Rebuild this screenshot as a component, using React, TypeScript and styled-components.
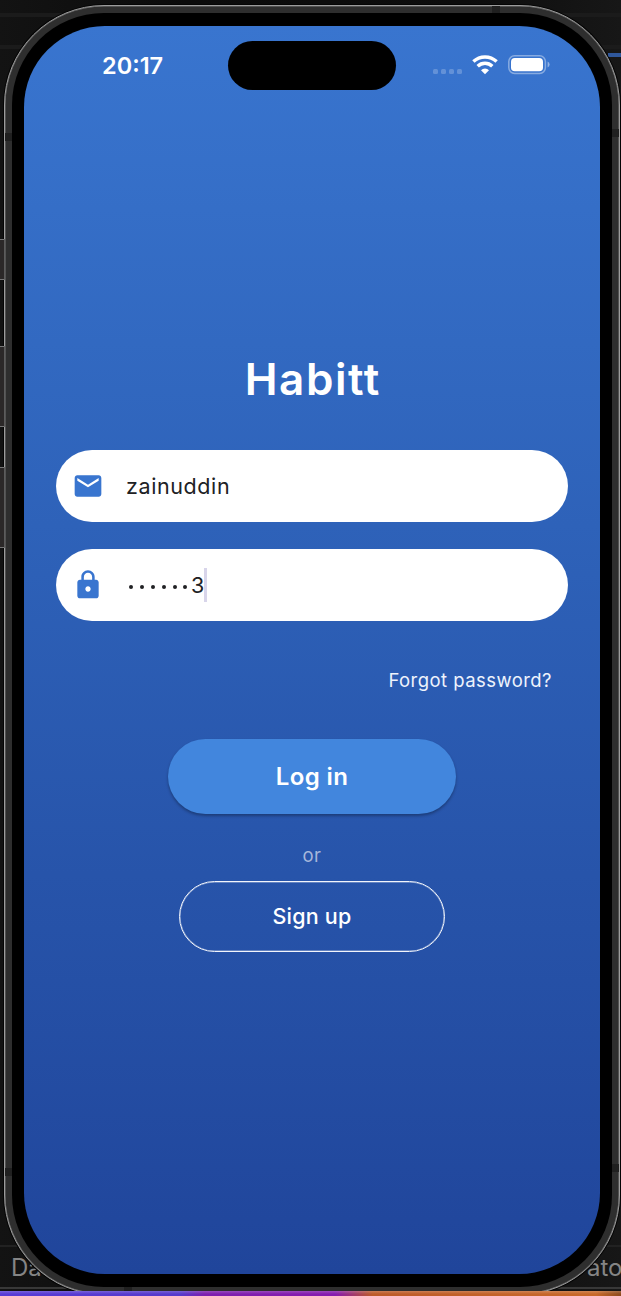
import React from "react";
import styled, { createGlobalStyle } from "styled-components";

const GlobalStyle = createGlobalStyle`
  * { box-sizing: border-box; }
  body { margin: 0; background: #111; }
  button, input { font-family: inherit; }
`;

const Desktop = styled.div`
  position: relative;
  width: 621px;
  height: 1296px;
  overflow: hidden;
  padding: 5px 0 0 4px;
  background: linear-gradient(90deg, #131313, #0b0b0b 30%, #0d0d0d 75%, #171717);
  font-family: Inter, "Liberation Sans", sans-serif;
`;

const Rule = styled.div<{ $top: number; $left?: number; $color: string; $size: number }>`
  position: absolute;
  left: ${(p) => p.$left ?? 0}px;
  right: 0;
  top: ${(p) => p.$top}px;
  height: ${(p) => p.$size}px;
  background: ${(p) => p.$color};
`;

const Caption = styled.span<{ $left: number }>`
  position: absolute;
  left: ${(p) => p.$left}px;
  top: 1254px;
  font-size: 24px;
  line-height: 28px;
  color: #858585;
`;

const SideButton = styled.div<{ $top: number; $height: number }>`
  position: absolute;
  left: -6px;
  top: ${(p) => p.$top}px;
  width: 6px;
  height: ${(p) => p.$height}px;
  background: #2b2828;
  border: 1px solid #777;
  border-right-color: #5c5c5c;
`;

const Antenna = styled.i<{ $side: "left" | "right" | "top" | "bottom"; $at: number }>`
  position: absolute;
  background: #202020;
  ${(p) => p.$side}: 0;
  ${(p) =>
    p.$side === "left" || p.$side === "right"
      ? `top: ${p.$at}px; width: 7px; height: 8px;`
      : `left: ${p.$at}px; width: 8px; height: 7px;`}
`;

const Frame = styled.div`
  position: relative;
  width: 616px;
  height: 1290px;
  padding: 7px;
  border: 1px solid #9c9c9c;
  border-radius: 100px;
  background: #2e2e2e;
  box-shadow: 0 0 0 1px #050505, inset 0 0 0 0.5px #777;
`;

const Bezel = styled.div`
  height: 1274px;
  padding: 13px 12px;
  border-radius: 92px;
  background: #000;
`;

const Screen = styled.main`
  display: flex;
  flex-direction: column;
  align-items: center;
  width: 576px;
  height: 1248px;
  border-radius: 81px;
  background: linear-gradient(180deg, #3975cf 0%, #2e62b9 40%, #2754aa 68%, #20459b 100%);
  color: #fff;
`;

const StatusBar = styled.header`
  display: flex;
  align-items: flex-start;
  width: 100%;
  height: 65px;
  padding: 15px 48px 0 78px;
`;

const Clock = styled.time`
  width: 126px;
  padding-top: 11px;
  font-size: 23.5px;
  line-height: 28px;
  font-weight: 600;
`;

const Island = styled.div`
  width: 168px;
  height: 49px;
  border-radius: 25px;
  background: #000;
`;

const StatusIcons = styled.svg`
  flex: none;
  margin: 12px 0 0 36px;
`;

const Brand = styled.h1`
  margin: 260px 0 1px;
  height: 56px;
  font-size: 44px;
  line-height: 56px;
  font-weight: 600;
  letter-spacing: 1.6px;
  text-indent: 1.6px;
`;

const Form = styled.form`
  display: flex;
  flex-direction: column;
  align-items: center;
  width: 512px;
  padding-top: 42px;
`;

const Field = styled.label<{ $gap?: number }>`
  display: flex;
  align-items: center;
  width: 512px;
  height: 72px;
  margin-bottom: ${(p) => p.$gap ?? 0}px;
  padding-left: 16px;
  border-radius: 36px;
  background: #fff;
  color: #202124;
`;

const FieldIcon = styled.svg`
  width: 32px;
  height: 32px;
  margin-right: 22px;
  fill: #3975cf;
`;

const Value = styled.span`
  font-size: 21.5px;
  line-height: 28px;
  letter-spacing: 0.6px;
  padding-bottom: 1px;
`;

const Mask = styled.span`
  display: flex;
  gap: 6.9px;
  padding: 3px 3.5px 0 3px;
`;

const Dot = styled.i`
  width: 4px;
  height: 4px;
  border-radius: 50%;
  background: #202124;
`;

const Caret = styled.span`
  width: 3px;
  height: 34px;
  margin-left: -1px;
  background: #d8d5ea;
`;

const Forgot = styled.a`
  align-self: flex-end;
  margin: 46px 16px 0 0;
  font-size: 18.5px;
  line-height: 26px;
  letter-spacing: 0.45px;
  color: #eef3fc;
`;

const PillButton = styled.button<{ $outlined?: boolean }>`
  width: ${(p) => (p.$outlined ? 266 : 288)}px;
  height: ${(p) => (p.$outlined ? 71 : 75)}px;
  margin-top: ${(p) => (p.$outlined ? 13 : 46)}px;
  padding: ${(p) => (p.$outlined ? "0 0 2px" : "0")};
  border: ${(p) => (p.$outlined ? "1px solid #f2f5fb" : "0")};
  border-radius: 38px;
  background: ${(p) => (p.$outlined ? "transparent" : "#4286dd")};
  box-shadow: ${(p) =>
    p.$outlined ? "inset 0 0 0 0.5px rgba(242, 245, 251, 0.6)" : "0 2px 3px rgba(0, 0, 0, 0.3)"};
  color: #fff;
  font-size: ${(p) => (p.$outlined ? 21.5 : 24)}px;
  font-weight: ${(p) => (p.$outlined ? 500 : 600)};
  letter-spacing: ${(p) => (p.$outlined ? 0.2 : 0.4)}px;
`;

const Or = styled.span`
  margin-top: 28px;
  font-size: 18.5px;
  line-height: 26px;
  letter-spacing: 0.4px;
  color: #a6b7db;
`;

const Strip = styled.div`
  position: absolute;
  left: 0;
  right: 0;
  bottom: 0;
  height: 5px;
  background:
    linear-gradient(180deg, rgba(255, 255, 255, 0.2), transparent 60%),
    linear-gradient(90deg, #583bd6 0%, #553acb 29%, #7d1fae 33%, #861bae 54%, #bd5a28 60%, #c8692a 96%, #8e4a1e 100%);
`;

export default function App() {
  return (
    <Desktop>
      <GlobalStyle />
      <Rule $top={13} $size={4} $color="#1b1b1b" />
      <Rule $top={45} $size={4} $color="#1b1b1b" />
      <Rule $top={53} $left={608} $size={4} $color="#2f579b" />
      <Rule $top={1245} $size={2} $color="#222" />
      <Rule $top={1287} $size={2} $color="#383838" />
      <Caption $left={11}>Da</Caption>
      <Caption $left={587}>ato</Caption>
      <Frame>
        <Bezel>
          <Screen>
            <StatusBar>
              <Clock>20:17</Clock>
              <Island />
              <StatusIcons width="120" height="24" viewBox="0 0 120 24">
                <g fill="#fff" fillOpacity="0.22">
                  <rect x="1" y="16" width="5" height="5" rx="1.5" />
                  <rect x="9" y="16" width="5" height="5" rx="1.5" />
                  <rect x="17" y="16" width="5" height="5" rx="1.5" />
                  <rect x="25" y="16" width="5" height="5" rx="1.5" />
                </g>
                <g fill="none" stroke="#fff" strokeWidth="3.4">
                  <path d="M41.4 8.6a16.8 16.8 0 0 1 23.2 0" />
                  <path d="M45.7 13.3a10.4 10.4 0 0 1 14.6 0" />
                </g>
                <path d="M49 17.2a5.6 5.6 0 0 1 8 0L53 21.2z" fill="#fff" />
                <rect x="76.8" y="2.8" width="36.6" height="17.6" rx="5.8" fill="none" stroke="#fff" strokeOpacity="0.4" strokeWidth="1.5" />
                <rect x="79" y="5" width="32" height="13.2" rx="3.8" fill="#fff" />
                <path d="M115.6 8.6q2 .9 2 3t-2 3z" fill="#fff" fillOpacity="0.45" />
              </StatusIcons>
            </StatusBar>
            <Brand>Habitt</Brand>
            <Form>
              <Field $gap={27}>
                <FieldIcon viewBox="0 0 24 24">
                  <path d="M20 4H4c-1.1 0-1.99.9-1.99 2L2 18c0 1.1.9 2 2 2h16c1.1 0 2-.9 2-2V6c0-1.1-.9-2-2-2zm0 4l-8 5-8-5V6l8 5 8-5v2z" />
                </FieldIcon>
                <Value>zainuddin</Value>
              </Field>
              <Field>
                <FieldIcon viewBox="0 0 24 24">
                  <path d="M18 8h-1V6c0-2.76-2.24-5-5-5S7 3.24 7 6v2H6c-1.1 0-2 .9-2 2v10c0 1.1.9 2 2 2h12c1.1 0 2-.9 2-2V10c0-1.1-.9-2-2-2zm-6 9c-1.1 0-2-.9-2-2s.9-2 2-2 2 .9 2 2-.9 2-2 2zm3.1-9H8.9V6c0-1.71 1.39-3.1 3.1-3.1s3.1 1.39 3.1 3.1v2z" />
                </FieldIcon>
                <Mask>
                  <Dot /><Dot /><Dot /><Dot /><Dot /><Dot />
                </Mask>
                <Value>3</Value>
                <Caret />
              </Field>
              <Forgot>Forgot password?</Forgot>
              <PillButton type="button">Log in</PillButton>
              <Or>or</Or>
              <PillButton type="button" $outlined>Sign up</PillButton>
            </Form>
          </Screen>
        </Bezel>
        <Antenna $side="left" $at={127} />
        <Antenna $side="right" $at={123} />
        <Antenna $side="top" $at={487} />
        <Antenna $side="bottom" $at={119} />
        <Antenna $side="left" $at={1162} />
        <Antenna $side="right" $at={1158} />
        <SideButton $top={233} $height={41} />
        <SideButton $top={340} $height={81} />
        <SideButton $top={461} $height={81} />
      </Frame>
      <Strip />
    </Desktop>
  );
}
